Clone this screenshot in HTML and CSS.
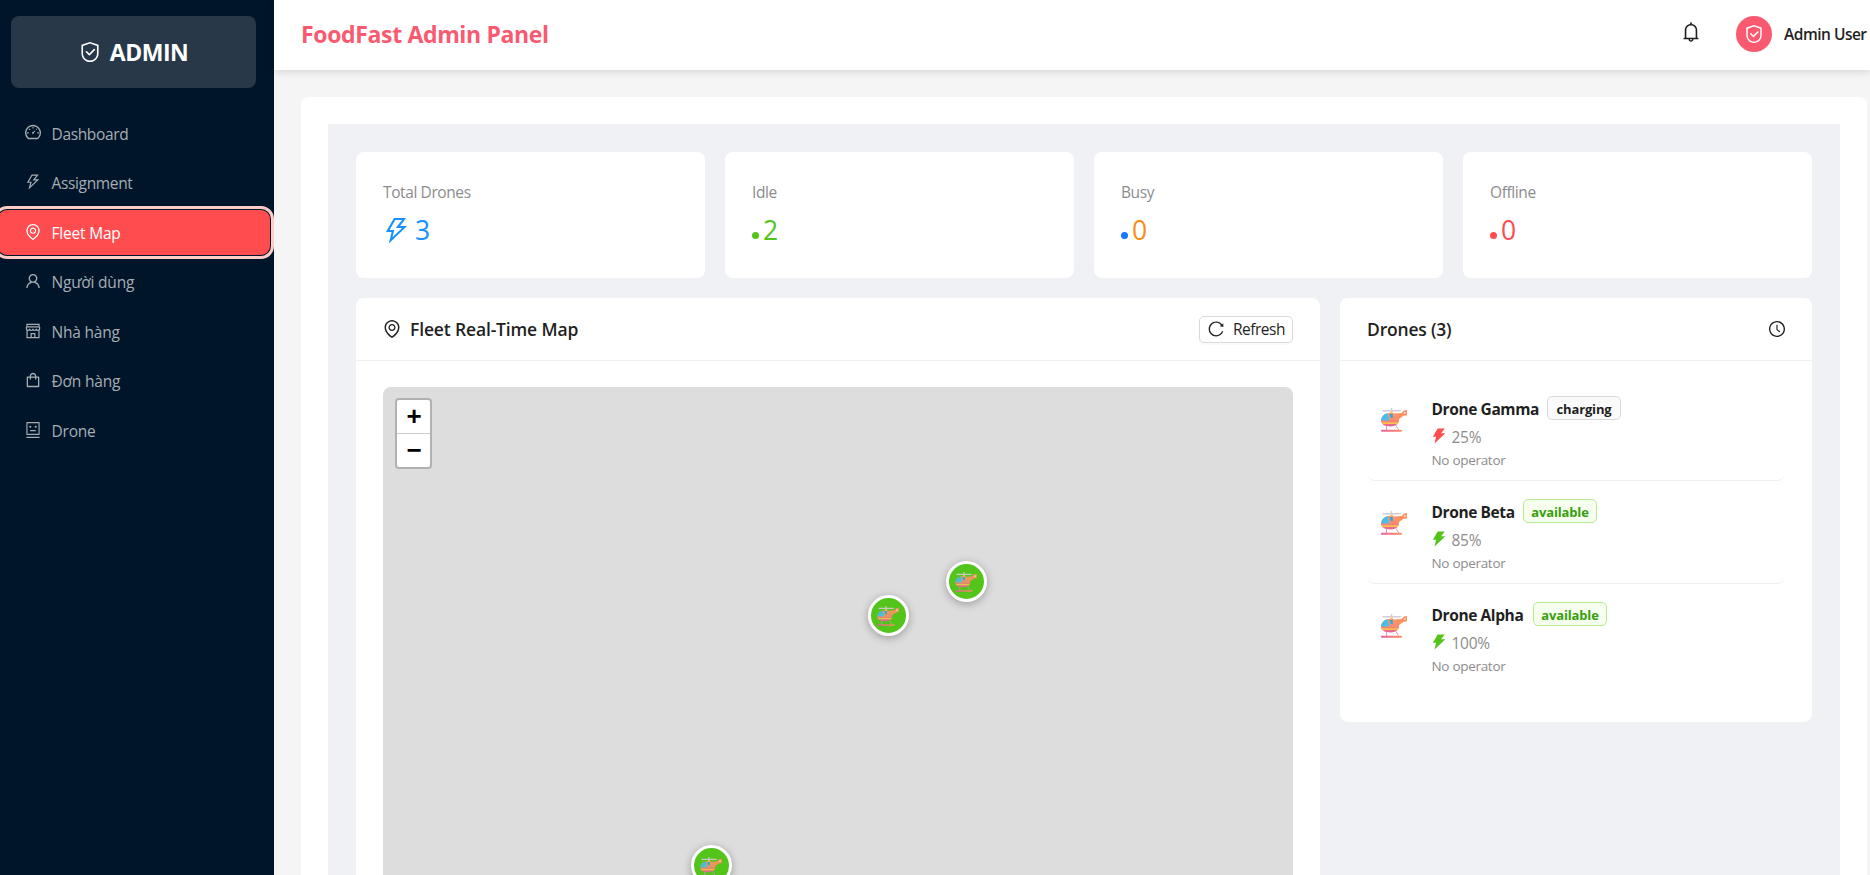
FILE: index.html
```html
<!DOCTYPE html>
<html lang="vi">
<head>
<meta charset="utf-8">
<title>FoodFast Admin Panel</title>
<link rel="stylesheet" href="styles.css">
</head>
<body>
<svg class="defs" width="0" height="0" aria-hidden="true">
  <defs>
    <linearGradient id="g-body" x1="0" y1="0" x2="0" y2="1"><stop offset="0" stop-color="#ff9a62"/><stop offset=".55" stop-color="#fb8a6c"/><stop offset="1" stop-color="#e0609a"/></linearGradient>
    <linearGradient id="g-skid" x1="0" y1="0" x2="1" y2="0"><stop offset="0" stop-color="#e8609a"/><stop offset="1" stop-color="#ff8f62"/></linearGradient>
    <linearGradient id="g-glass" x1="0" y1="0" x2="1" y2="1"><stop offset="0" stop-color="#3fb4e6"/><stop offset="1" stop-color="#55c3ea"/></linearGradient>
    <symbol id="heli" viewBox="0 0 26 24">
      <rect x="1.5" y="2" width="18.5" height="1.5" rx=".6" fill="#d5cbd8"/>
      <rect x="9.8" y="0" width="1.5" height="3.5" rx=".6" fill="#d5cbd8"/>
      <path d="M8.6 6.2 9.6 3.6h2l1 2.6z" fill="#f9c25c"/>
      <path d="M5.5 18v4M15 17.5l2.6 4.2" stroke="#c9a0bd" stroke-width="1" fill="none"/>
      <path d="M13 5.6 20.500 5 23 2.400 26 2v5.600L22.600 7.800 18.400 10.800 16.600 14z" fill="#ff9160"/>
      <circle cx="23.800" cy="5" r="1.100" fill="#ffd9c0"/>
      <path d="M0 12.200C.6 7.600 4.600 5 9.400 5 14.600 5 18 7.600 18 12c0 4-3.600 6.400-8.400 6.400C4 18.400 0 16.600 0 12.200z" fill="url(#g-body)"/>
      <path d="M.6 14.300H17.500L16.600 16H1.700z" fill="#fbc04e"/>
      <path d="M0 12.200C.6 8.300 3.200 6 6.600 5.300L8.700 11.800 6 12.700z" fill="url(#g-glass)"/>
      <path d="M8.200 6h3.600v4.200L9.800 10z" fill="#3aa6d8"/>
      <rect x="0" y="21.800" width="21" height="2" rx=".8" fill="url(#g-skid)"/>
    </symbol>
    <symbol id="safety" viewBox="64 64 896 896"><path d="M512 64L128 192v384c0 212.100 171.900 384 384 384s384-171.900 384-384V192L512 64zm312 512c0 172.300-139.700 312-312 312S200 748.300 200 576V246l312-110 312 110v330z"/><path d="M378.400 475.100a35.910 35.910 0 00-50.900 0 35.910 35.910 0 000 50.900l129.400 129.400 2.100 2.100a33.980 33.980 0 0048.100 0L730.600 434a33.980 33.980 0 000-48.100l-2.800-2.800a33.980 33.980 0 00-48.100 0L483 579.700 378.400 475.100z"/></symbol>
    <symbol id="dashboard" viewBox="64 64 896 896"><path d="M924.800 385.600a446.700 446.700 0 00-96-142.400 446.700 446.700 0 00-142.400-96C631.100 123.800 572.500 112 512 112s-119.100 11.800-174.400 35.200a446.700 446.700 0 00-142.400 96 446.700 446.700 0 00-96 142.400C75.800 440.900 64 499.500 64 560c0 132.700 58.300 257.700 159.900 343.100l1.700 1.400c5.800 4.800 13.100 7.500 20.600 7.500h531.700c7.500 0 14.800-2.700 20.600-7.500l1.700-1.400C901.700 817.700 960 692.700 960 560c0-60.500-11.900-119.100-35.200-174.400zM761.400 836H262.600A371.120 371.120 0 01140 560c0-99.400 38.700-192.800 109-263 70.300-70.300 163.700-109 263-109 99.400 0 192.800 38.700 263 109 70.300 70.300 109 163.700 109 263 0 105.600-44.500 205.500-122.600 276z"/><path d="M623.500 421.500a8.030 8.030 0 00-11.300 0L527.700 506c-18.700-5-39.400-.2-54.100 14.500a55.950 55.950 0 000 79.200 55.950 55.950 0 0079.200 0 55.870 55.870 0 0014.500-54.100l84.500-84.500c3.100-3.100 3.100-8.200 0-11.300l-28.300-28.300z"/><path d="M512 232v88M750 560h96M178 560h96M294 342l56 56M730 342l-34 34" fill="none" stroke="currentColor" stroke-width="58"/></symbol>
    <symbol id="bolt" viewBox="64 64 896 896"><path d="M848 359.300H627.700L825.800 109c4.100-5.300.4-13-6.300-13H436c-2.800 0-5.500 1.500-6.900 4L170 547.500c-3.100 5.300.7 12 6.900 12h174.400l-89.400 357.600c-1.900 7.800 7.500 13.300 13.300 7.700L853.500 373c5.200-4.900 1.700-13.700-5.500-13.700zM378.200 732.500l60.300-241H281.100l189.600-327.400h224.600L487 427.400h211L378.200 732.500z"/></symbol>
    <symbol id="bolt-fill" viewBox="64 64 896 896"><path d="M848 359.300H627.700L825.800 109c4.100-5.300.4-13-6.300-13H436c-2.800 0-5.500 1.500-6.900 4L170 547.500c-3.100 5.300.7 12 6.900 12h174.400l-89.400 357.600c-1.900 7.800 7.500 13.300 13.300 7.700L853.500 373c5.200-4.900 1.700-13.700-5.500-13.700z"/></symbol>
    <symbol id="pin" viewBox="64 64 896 896"><path d="M854.600 289.100a362.490 362.490 0 00-79.900-115.700 370.830 370.830 0 00-118.200-77.800C610.700 76.600 562.100 67 512 67c-50.100 0-98.700 9.600-144.500 28.500-44.300 18.300-84 44.500-118.200 77.800A363.600 363.600 0 00169.400 289c-19.500 45-29.400 92.800-29.400 142 0 70.600 16.900 140.900 50.100 208.700 26.700 54.500 64 107.600 111 158.100 80.300 86.200 164.500 138.900 188.400 153a43.900 43.900 0 0022.400 6.100c7.800 0 15.500-2 22.400-6.100 23.900-14.100 108.100-66.800 188.400-153 47-50.400 84.300-103.600 111-158.100C867.100 572 884 501.800 884 431.100c0-49.200-9.900-97-29.400-142zM512 880.200c-65.900-41.900-300-207.800-300-449.100 0-77.900 31.100-151.100 87.600-206.300C356.300 169.500 431.700 139 512 139s155.700 30.500 212.400 85.900C780.900 280 812 353.200 812 431.100c0 241.300-234.100 407.200-300 449.100zm0-617.200c-97.200 0-176 78.800-176 176s78.800 176 176 176 176-78.800 176-176-78.800-176-176-176zm79.200 255.200A111.600 111.600 0 01512 551c-29.900 0-58-11.700-79.200-32.800A111.600 111.600 0 01400 439c0-29.900 11.700-58 32.800-79.200A111.600 111.600 0 01512 327c29.900 0 58 11.600 79.200 32.800S624 409.100 624 439c0 29.900-11.600 58-32.800 79.200z"/></symbol>
    <symbol id="user" viewBox="64 64 896 896"><path d="M858.500 763.600a374 374 0 00-80.600-119.500 375.630 375.630 0 00-119.500-80.600c-.4-.2-.8-.3-1.200-.5C719.500 518 760 444.700 760 362c0-137-111-248-248-248S264 225 264 362c0 82.700 40.500 156 102.800 201.100-.4.2-.8.3-1.200.5-44.800 18.900-85 46-119.500 80.600a375.630 375.630 0 00-80.600 119.500A371.700 371.700 0 00136 901.800a8 8 0 008 8.200h60c4.400 0 7.900-3.500 8-7.800 2-77.200 33-149.500 87.800-204.300 56.700-56.700 132-87.900 212.200-87.900s155.500 31.200 212.200 87.900C779 752.700 810 825 812 902.200c.1 4.400 3.600 7.800 8 7.800h60a8 8 0 008-8.200c-1-47.800-10.900-94.300-29.500-138.200zM512 534c-45.900 0-89.100-17.900-121.600-50.400S340 407.900 340 362c0-45.900 17.900-89.100 50.400-121.600S466.100 190 512 190s89.100 17.900 121.600 50.400S684 316.100 684 362c0 45.900-17.900 89.100-50.400 121.600S557.900 534 512 534z"/></symbol>
    <symbol id="shop" viewBox="64 64 896 896"><g fill="none" stroke="currentColor" stroke-width="68"><path d="M174 146h676v140H174zM142 286h740M142 286v104a92 92 0 0 0 184 0 92 92 0 0 0 186 0 92 92 0 0 0 186 0 92 92 0 0 0 184 0V286M178 480v398h668V480M408 878V658h208v220"/></g></symbol>
    <symbol id="bag" viewBox="64 64 896 896"><path d="M832 312H696v-16c0-101.600-82.400-184-184-184s-184 82.400-184 184v16H192c-17.700 0-32 14.300-32 32v536c0 17.700 14.300 32 32 32h640c17.700 0 32-14.300 32-32V344c0-17.700-14.300-32-32-32zm-432-16c0-61.900 50.100-112 112-112s112 50.100 112 112v16H400v-16zm392 544H232V384h96v88c0 4.400 3.600 8 8 8h56c4.400 0 8-3.600 8-8v-88h224v88c0 4.400 3.600 8 8 8h56c4.400 0 8-3.600 8-8v-88h96v456z"/></symbol>
    <symbol id="robot" viewBox="64 64 896 896"><path d="M300 328a60 60 0 10120 0 60 60 0 10-120 0zM852 64H172c-17.700 0-32 14.300-32 32v660c0 17.700 14.300 32 32 32h680c17.700 0 32-14.300 32-32V96c0-17.700-14.300-32-32-32zm-32 660H204V128h616v596zM604 328a60 60 0 10120 0 60 60 0 10-120 0zm250.200 556H169.800c-16.500 0-29.800 14.300-29.800 32v36c0 4.400 3.300 8 7.400 8h729.100c4.100 0 7.400-3.600 7.400-8v-36c.1-17.700-13.200-32-29.700-32zM664 508H360c-4.400 0-8 3.600-8 8v60c0 4.400 3.600 8 8 8h304c4.400 0 8-3.600 8-8v-60c0-4.400-3.600-8-8-8z"/></symbol>
    <symbol id="bell" viewBox="64 64 896 896"><path d="M816 768h-24V428c0-141.100-104.300-257.700-240-277.100V112c0-22.100-17.900-40-40-40s-40 17.900-40 40v38.900c-135.700 19.400-240 136-240 277.100v340h-24c-17.700 0-32 14.300-32 32v32c0 4.400 3.600 8 8 8h216c0 61.800 50.200 112 112 112s112-50.200 112-112h216c4.400 0 8-3.600 8-8v-32c0-17.700-14.300-32-32-32zM512 888c-26.500 0-48-21.500-48-48h96c0 26.500-21.500 48-48 48zM304 768V428c0-55.600 21.600-107.800 60.900-147.100S456.400 220 512 220c55.600 0 107.800 21.600 147.100 60.900S720 372.400 720 428v340H304z"/></symbol>
    <symbol id="reload" viewBox="64 64 896 896"><path d="M909.100 209.300l-56.400 44.100C775.800 155.100 656.200 92 521.900 92 290 92 102.300 279.500 102 511.500 101.700 743.700 289.800 932 521.900 932c181.300 0 335.800-115 394.600-276.100 1.500-4.200-.7-8.900-4.900-10.300l-56.700-19.500a8 8 0 00-10.100 4.800c-1.800 5-3.800 10-5.900 14.900-17.300 41-42.100 77.800-73.700 109.400A344.770 344.770 0 01655.900 829c-42.300 17.900-87.400 27-133.800 27-46.500 0-91.500-9.100-133.800-27A341.500 341.500 0 01279 755.200a342.160 342.160 0 01-73.700-109.400c-17.900-42.400-27-87.400-27-133.900s9.100-91.500 27-133.900c17.300-41 42.100-77.800 73.700-109.400 31.600-31.600 68.400-56.400 109.300-73.800 42.300-17.900 87.400-27 133.800-27 46.500 0 91.500 9.100 133.800 27a341.500 341.500 0 01109.300 73.800c9.900 9.900 19.200 20.400 27.800 31.400l-60.200 47a8 8 0 003 14.100l175.600 43c5 1.200 9.900-2.600 9.900-7.700l.8-180.900c-.1-6.600-7.800-10.300-13-6.200z"/></symbol>
    <symbol id="clock" viewBox="64 64 896 896"><path d="M512 64C264.600 64 64 264.600 64 512s200.600 448 448 448 448-200.600 448-448S759.400 64 512 64zm0 820c-205.400 0-372-166.600-372-372s166.600-372 372-372 372 166.600 372 372-166.600 372-372 372z"/><path d="M686.700 638.600L544.100 535.500V288c0-4.400-3.600-8-8-8H488c-4.400 0-8 3.600-8 8v275.400c0 2.600 1.200 5 3.300 6.500l165.400 120.600c3.600 2.600 8.600 1.800 11.200-1.700l28.600-39c2.600-3.700 1.800-8.700-1.800-11.200z"/></symbol>
  </defs>
</svg>
<div class="app">
  <aside class="sidebar">
    <div class="brand"><svg class="brand-icon"><use href="#safety"/></svg><span>ADMIN</span></div>
    <nav class="menu">
      <a class="menu-item"><svg class="icon"><use href="#dashboard"/></svg><span>Dashboard</span></a>
      <a class="menu-item"><svg class="icon"><use href="#bolt"/></svg><span>Assignment</span></a>
      <a class="menu-item active"><svg class="icon"><use href="#pin"/></svg><span>Fleet Map</span></a>
      <a class="menu-item"><svg class="icon"><use href="#user"/></svg><span>Người dùng</span></a>
      <a class="menu-item"><svg class="icon"><use href="#shop"/></svg><span>Nhà hàng</span></a>
      <a class="menu-item"><svg class="icon"><use href="#bag"/></svg><span>Đơn hàng</span></a>
      <a class="menu-item"><svg class="icon"><use href="#robot"/></svg><span>Drone</span></a>
    </nav>
  </aside>
  <div class="main">
    <header class="topbar">
      <h1 class="title">FoodFast Admin Panel</h1>
      <div class="account">
        <svg class="bell"><use href="#bell"/></svg>
        <div class="avatar"><svg><use href="#safety"/></svg></div>
        <span class="account-name">Admin User</span>
      </div>
    </header>
    <main class="content">
      <div class="page">
        <section class="stats">
          <div class="card stat"><div class="stat-title">Total Drones</div><div class="stat-value blue"><svg class="stat-icon"><use href="#bolt"/></svg><span>3</span></div></div>
          <div class="card stat"><div class="stat-title">Idle</div><div class="stat-value green"><i class="dot dot-green"></i><span>2</span></div></div>
          <div class="card stat"><div class="stat-title">Busy</div><div class="stat-value orange"><i class="dot dot-blue"></i><span>0</span></div></div>
          <div class="card stat"><div class="stat-title">Offline</div><div class="stat-value red"><i class="dot dot-red"></i><span>0</span></div></div>
        </section>
        <section class="panels">
          <div class="card map-card">
            <div class="card-head">
              <svg class="head-icon"><use href="#pin"/></svg>
              <h2 class="map-title">Fleet Real-Time Map</h2>
              <button class="refresh"><svg class="icon-16"><use href="#reload"/></svg><span>Refresh</span></button>
            </div>
            <div class="map-wrap">
              <div class="map">
                <div class="zoom"><span class="zoom-in">+</span><span class="zoom-out">−</span></div>
                <div class="marker m1"><svg><use href="#heli"/></svg></div>
                <div class="marker m2"><svg><use href="#heli"/></svg></div>
                <div class="marker m3"><svg><use href="#heli"/></svg></div>
              </div>
            </div>
          </div>
          <div class="card list-card">
            <div class="card-head">
              <h2 class="list-title">Drones (3)</h2>
              <svg class="icon-16 clock"><use href="#clock"/></svg>
            </div>
            <div class="list">
              <div class="drone">
                <svg class="heli"><use href="#heli"/></svg>
                <div class="info">
                  <div class="name"><b class="n-gamma">Drone Gamma</b><span class="tag tag-gray">charging</span></div>
                  <div class="battery"><svg class="red"><use href="#bolt-fill"/></svg><span>25%</span></div>
                  <div class="operator">No operator</div>
                </div>
              </div>
              <div class="drone">
                <svg class="heli"><use href="#heli"/></svg>
                <div class="info">
                  <div class="name"><b class="n-beta">Drone Beta</b><span class="tag tag-green">available</span></div>
                  <div class="battery"><svg class="green"><use href="#bolt-fill"/></svg><span>85%</span></div>
                  <div class="operator">No operator</div>
                </div>
              </div>
              <div class="drone">
                <svg class="heli"><use href="#heli"/></svg>
                <div class="info">
                  <div class="name"><b class="n-alpha">Drone Alpha</b><span class="tag tag-green">available</span></div>
                  <div class="battery"><svg class="green"><use href="#bolt-fill"/></svg><span>100%</span></div>
                  <div class="operator">No operator</div>
                </div>
              </div>
            </div>
          </div>
        </section>
      </div>
    </main>
  </div>
</div>
</body>
</html>
```
FILE: styles.css
```css
* { box-sizing: border-box; }
html, body { margin: 0; height: 100%; overflow: hidden; }
body {
  font-family: "Open Sans", "Noto Sans", sans-serif;
  font-size: 15.5px;
  color: #1f1f1f;
  background: #f5f5f5;
  white-space: nowrap;
}
svg { fill: currentColor; flex: none; display: block; }
h1, h2 { margin: 0; }
.defs { position: absolute; }
.app { display: flex; height: 875px; overflow: hidden; }

/* Sidebar */
.sidebar { width: 274px; flex: none; background: #001529; overflow: hidden; }
.brand {
  display: flex; align-items: center; justify-content: center; gap: 10px;
  height: 72px; margin: 16px 18px 0 11px; padding-left: 1px;
  border-radius: 8px; background: #293848; color: #fff;
  font-size: 23px; font-weight: 700; letter-spacing: -0.5px;
}
.brand-icon { width: 20px; height: 20px; }
.menu { display: flex; flex-direction: column; gap: 3.9px; margin: 22.5px 4px 0 -2px; }
.menu-item {
  display: flex; align-items: center; gap: 10.5px;
  height: 45.7px; padding-left: 27px; border-radius: 9px;
  color: #a6adb4; letter-spacing: -0.35px;
}
.menu-item .icon { width: 16px; height: 16px; margin-top: -2px; }
.menu-item span { margin-top: 0.5px; }
.menu-item:nth-child(n+3) span { letter-spacing: -0.2px; }
.active { background: #ff4d4f; color: #fff; outline: 3px solid #ffccc7; outline-offset: 1px; }

/* Header */
.main { flex: 1; min-width: 0; display: flex; flex-direction: column; }
.topbar {
  position: relative; z-index: 1;
  display: flex; align-items: center; justify-content: space-between;
  height: 70px; flex: none; padding: 0 3px 2px 27px;
  background: #fff; box-shadow: 0 2px 8px rgba(0, 0, 0, 0.13);
}
.title { font-size: 23px; font-weight: 700; color: #f95a70; letter-spacing: -0.35px; }
.account { display: flex; align-items: center; }
.bell { width: 20px; height: 20px; margin: -4px 35px 0 0; }
.avatar {
  display: flex; align-items: center; justify-content: center;
  width: 36px; height: 36px; margin-right: 12px;
  border-radius: 50%; background: #f95a70; color: #fff;
}
.avatar svg { width: 18px; height: 18px; }
.account-name { width: 83px; font-weight: 600; letter-spacing: -0.5px; }

/* Content */
.content { flex: none; margin: 27px 3px 0 27px; padding: 27px; border-radius: 8px 8px 0 0; background: #fff; }
.page { height: 900px; padding: 28px; background: #f0f1f5; }
.card { background: #fff; border-radius: 8px; }
.stats { display: grid; grid-template-columns: repeat(4, 1fr); gap: 20px; }
.stat { height: 126px; padding: 27px; }
.stat-title { height: 25px; line-height: 26px; color: #8c8c8c; letter-spacing: -0.4px; }
.stat-value { display: flex; align-items: center; height: 30px; margin-top: 11px; font-size: 26.5px; }
.stat-icon { width: 27px; height: 27px; margin-right: 5px; }
.dot { width: 7px; height: 7px; margin: 10px 4px 0 0; border-radius: 50%; }
.dot-green { background: #52c41a; }
.dot-blue { background: #1677ff; }
.dot-red { background: #ff4d4f; }
.blue { color: #1890ff; }
.green { color: #52c41a; }
.orange { color: #fa8c16; }
.red { color: #ff4d4f; }

.panels { display: grid; grid-template-columns: 964px 1fr; gap: 20px; align-items: start; margin-top: 20px; }
.card-head { display: flex; align-items: center; height: 63px; padding: 0 27px; border-bottom: 1px solid #f0f0f0; }
.head-icon { width: 18px; height: 18px; margin-right: 9px; }
.map-title { font-size: 17.5px; font-weight: 600; letter-spacing: -0.15px; }
.list-title { font-size: 17.5px; font-weight: 600; letter-spacing: -0.2px; }
.refresh {
  display: flex; align-items: center; gap: 9px;
  width: 94px; height: 27px; margin-left: auto; padding: 0 8px;
  border: 1px solid #d9d9d9; border-radius: 5px; background: #fff;
  box-shadow: 0 2px 0 rgba(0, 0, 0, 0.02);
  font: inherit; color: inherit; letter-spacing: -0.5px;
}
.icon-16 { width: 16px; height: 16px; }
.clock { margin-left: auto; }
.map-wrap { padding: 26px 27px; }
.map { position: relative; height: 686px; border-radius: 8px; background: #ddd; }
.zoom {
  position: absolute; left: 12px; top: 11px; width: 37px; height: 71px;
  display: flex; flex-direction: column;
  border: 2px solid #b1b1b1; border-radius: 4px; background: #fff;
  color: #000; font-family: "Liberation Sans", sans-serif; font-weight: 700;
  font-size: 26px; line-height: 33px; text-align: center;
}
.zoom span { height: 34px; padding-left: 1px; }
.zoom-in { border-bottom: 1px solid #ccc; }
.marker {
  position: absolute; width: 41px; height: 41px;
  display: flex; align-items: center; justify-content: center;
  border: 3px solid #fff; border-radius: 50%; background: #52c41a;
  box-shadow: 0 2px 9px rgba(0, 0, 0, 0.3);
}
.marker svg { width: 22px; height: 20px; margin-left: -1px; margin-top: 2px; opacity: 0.9; }
.m1 { left: 562.5px; top: 173.5px; }
.m2 { left: 485px; top: 207.5px; }
.m3 { left: 307.5px; top: 458px; }

.list-card { height: 424px; }
.list { padding: 17px 27px; }
.drone { display: flex; height: 103px; padding: 17px 0 0 14px; border-bottom: 1px solid #f0f0f0; border-radius: 8px; }
.drone:last-child { border-bottom-color: transparent; }
.heli { width: 26px; height: 24px; margin: 13px 24.5px 0 0; }
.name { display: flex; align-items: center; gap: 10.5px; height: 26px; padding-top: 1px; letter-spacing: -0.4px; }
.n-gamma { width: 105px; }
.n-beta { width: 81px; }
.n-alpha { width: 91px; }
.tag {
  width: 74px; height: 24px; margin-top: -1px;
  border: 1px solid #d9d9d9; border-radius: 5px; background: #fafafa;
  font-size: 13px; font-weight: 700; line-height: 24px; text-align: center; letter-spacing: -0.15px;
}
.tag-green { color: #389e0d; background: #f6ffed; border-color: #b7eb8f; }
.battery { display: flex; align-items: center; gap: 5px; height: 25px; margin-top: 3px; color: #8c8c8c; letter-spacing: -0.3px; }
.battery svg { width: 16px; height: 16px; margin: -2px 0 0 -1px; }
.operator { height: 20px; line-height: 23px; color: #8c8c8c; font-size: 13.5px; letter-spacing: -0.3px; }
```
